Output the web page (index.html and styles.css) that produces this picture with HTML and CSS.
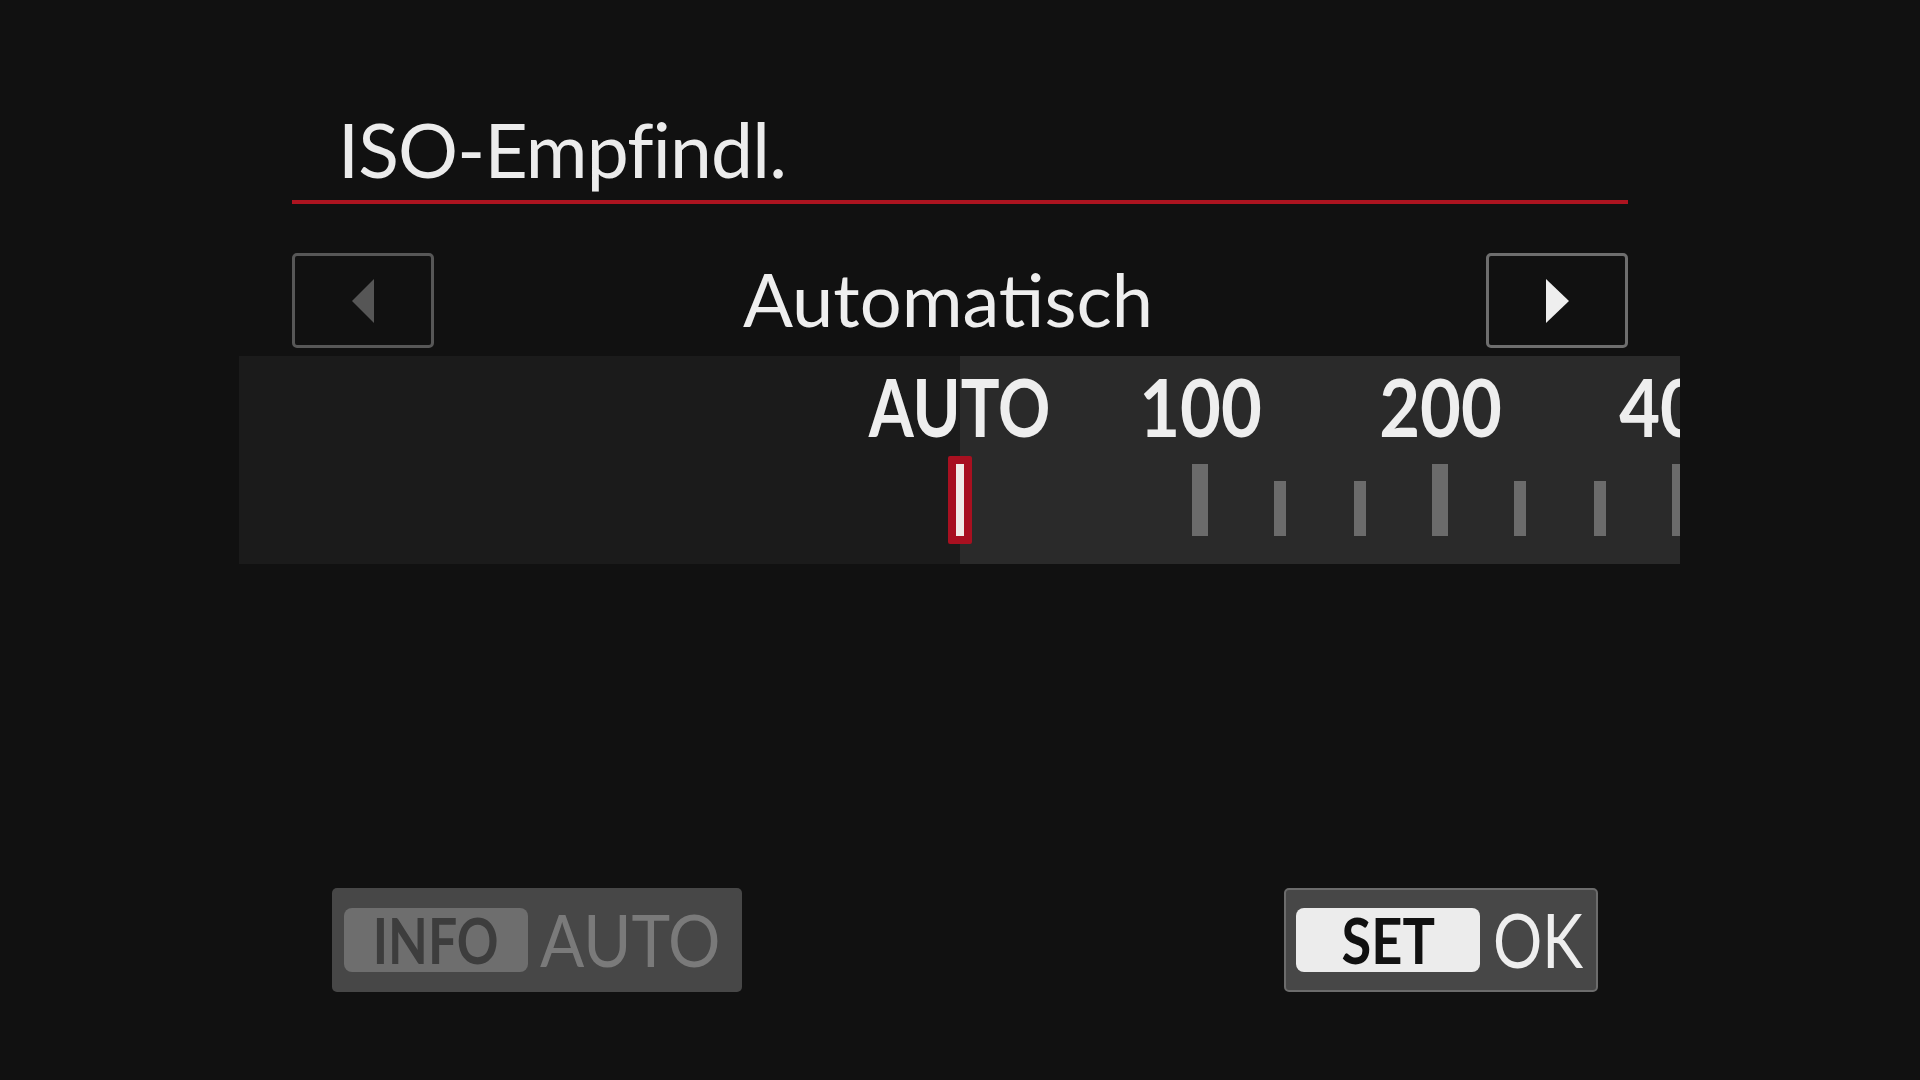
FILE: index.html
```html
<!DOCTYPE html>
<html lang="de">
<head>
<meta charset="utf-8">
<title>ISO-Empfindl.</title>
<link rel="stylesheet" href="styles.css">
</head>
<body>
<div class="screen">
  <header class="head">
    <h1 class="title">ISO-Empfindl.</h1>
  </header>

  <div class="nav">
    <div class="btn btn-prev">
      <svg width="22" height="44" viewBox="0 0 22 44"><polygon points="22,0 0,22 22,44" fill="#565656"/></svg>
    </div>
    <div class="value">Automatisch</div>
    <div class="btn btn-next">
      <svg width="23" height="44" viewBox="0 0 23 44"><polygon points="0,0 23,22 0,44" fill="#eeeeee"/></svg>
    </div>
  </div>

  <div class="scale">
    <div class="row labels">
      <span class="slot"><span class="lbl lbl-auto">AUTO</span></span>
      <span class="slot"></span>
      <span class="slot"></span>
      <span class="slot"><span class="lbl">100</span></span>
      <span class="slot"></span>
      <span class="slot"></span>
      <span class="slot"><span class="lbl">200</span></span>
      <span class="slot"></span>
      <span class="slot"></span>
      <span class="slot"><span class="lbl">400</span></span>
    </div>
    <div class="row ticks">
      <span class="slot"><span class="marker"></span></span>
      <span class="slot"></span>
      <span class="slot"></span>
      <span class="slot"><span class="tick tick-major"></span></span>
      <span class="slot"><span class="tick"></span></span>
      <span class="slot"><span class="tick"></span></span>
      <span class="slot"><span class="tick tick-major"></span></span>
      <span class="slot"><span class="tick"></span></span>
      <span class="slot"><span class="tick"></span></span>
      <span class="slot"><span class="tick tick-major"></span></span>
    </div>
  </div>

  <div class="foot">
    <div class="hint hint-info">
      <span class="key"><span class="kt">INFO</span></span>
      <span class="act">AUTO</span>
    </div>
    <div class="hint hint-set">
      <span class="key"><span class="kt">SET</span></span>
      <span class="act">OK</span>
    </div>
  </div>
</div>
</body>
</html>
```

FILE: styles.css
```css
html, body {
  margin: 0;
  padding: 0;
  background: #111111;
}

body {
  font-family: Lato, "Open Sans", "DejaVu Sans", sans-serif;
  color: #ececec;
}

.screen {
  width: 1920px;
  height: 1080px;
  box-sizing: border-box;
  padding-top: 112px;
  overflow: hidden;
}

/* title */
.head {
  margin-left: 292px;
  width: 1336px;
  padding-bottom: 13px;
  border-bottom: 4px solid #ad1420;
}

.title {
  margin: 0;
  padding-left: 46px;
  font-size: 75px;
  font-weight: 400;
  line-height: 1;
  letter-spacing: -0.8px;
  color: #ececec;
}

/* selector row */
.nav {
  margin-left: 292px;
  margin-top: 49px;
  width: 1336px;
  height: 95px;
  display: flex;
  align-items: center;
}

.btn {
  width: 142px;
  height: 95px;
  box-sizing: border-box;
  border: 3px solid #575757;
  border-radius: 5px;
  display: flex;
  align-items: center;
  justify-content: center;
  flex: 0 0 auto;
}

.btn-next {
  border-color: #6e6e6e;
}

.value {
  flex: 1;
  text-align: center;
  font-size: 74px;
  line-height: 1;
  color: #eeeeee;
  padding-right: 24px;
  padding-bottom: 4px;
}

/* scale */
.scale {
  margin-left: 239px;
  margin-top: 8px;
  width: 1441px;
  height: 208px;
  box-sizing: border-box;
  padding: 9px 0 0 681px;
  overflow: hidden;
  background: linear-gradient(90deg, #1b1b1b 721px, #2a2a2a 721px);
}

.row {
  display: flex;
}

.labels {
  height: 81px;
}

.slot {
  flex: 0 0 80px;
  min-width: 0;
  display: flex;
  justify-content: center;
  align-items: flex-end;
}

.lbl {
  flex: 0 0 auto;
  font-size: 81px;
  font-weight: 700;
  line-height: 1;
  color: #eeeeee;
  white-space: nowrap;
  transform: scaleX(0.87);
}

.lbl-auto {
  transform: scaleX(0.80);
}

.ticks {
  margin-top: 10px;
  height: 88px;
}

.ticks .slot {
  height: 88px;
}

.tick {
  width: 12px;
  height: 55px;
  margin-bottom: 8px;
  background: #6b6b6b;
}

.tick-major {
  width: 16px;
  height: 72px;
}

.marker {
  width: 8px;
  height: 72px;
  background: #f0ede8;
  border: 8px solid #a81020;
  border-radius: 2px;
}

/* footer hints */
.foot {
  margin-left: 332px;
  margin-top: 324px;
  width: 1266px;
  display: flex;
  justify-content: space-between;
}

.hint {
  height: 104px;
  box-sizing: border-box;
  background: #474747;
  border-radius: 5px;
  display: flex;
  align-items: center;
  padding-left: 12px;
}

.hint-info {
  width: 410px;
}

.hint-set {
  width: 314px;
  border: 2px solid #6c6c6c;
  padding-left: 10px;
}

.key {
  width: 184px;
  height: 64px;
  border-radius: 8px;
  display: flex;
  align-items: center;
  justify-content: center;
  flex: 0 0 auto;
}

.kt {
  font-size: 63px;
  font-weight: 700;
  line-height: 1;
  white-space: nowrap;
  padding-bottom: 2px;
}

.hint-info .key {
  background: #6e6e6e;
  color: #3d3d3d;
}

.hint-info .kt {
  transform: scaleX(0.82);
}

.hint-set .key {
  background: #ececec;
  color: #111111;
}

.hint-set .kt {
  transform: scaleX(0.86);
}

.act {
  margin-left: 12px;
  line-height: 1;
  white-space: nowrap;
  transform-origin: left center;
  padding-bottom: 2px;
}

.hint-info .act {
  font-size: 72px;
  color: #7a7a7a;
  transform: scaleX(0.91);
}

.hint-set .act {
  font-size: 75px;
  color: #eeeeee;
  margin-left: 13px;
  transform: scaleX(0.82);
}
```
